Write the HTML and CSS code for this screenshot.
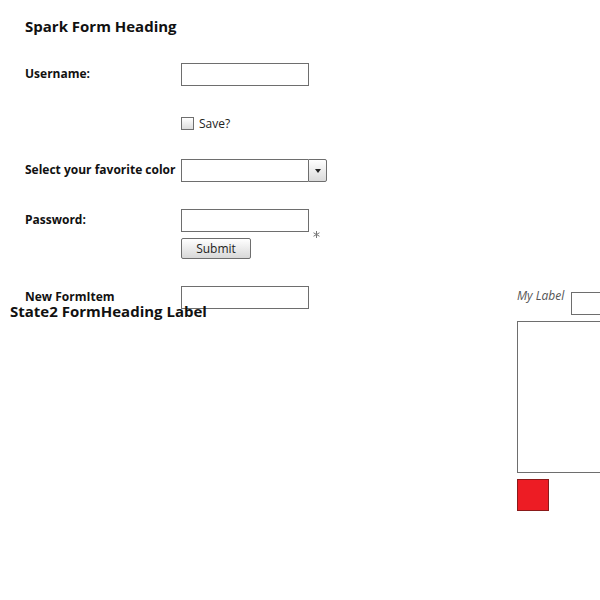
FILE: index.html
```html
<!DOCTYPE html>
<html>
<head>
<meta charset="utf-8">
<link rel="stylesheet" href="styles.css">
</head>
<body>
<div class="stage">
  <form class="form">
    <h1 class="form-heading">Spark Form Heading</h1>
    <div class="item">
      <label class="item-label">Username:</label>
      <div class="item-content"><input class="text-input" type="text"></div>
    </div>
    <div class="item item-check">
      <span class="item-label"></span>
      <div class="item-content">
        <label class="check"><span class="check-box"></span><span>Save?</span></label>
      </div>
    </div>
    <div class="item">
      <label class="item-label">Select your favorite color</label>
      <div class="item-content">
        <div class="combo"><span class="combo-field"></span><span class="combo-btn"><span class="combo-arrow"></span></span></div>
      </div>
    </div>
    <div class="item">
      <label class="item-label">Password:</label>
      <div class="item-content item-stack">
        <input class="text-input" type="password">
        <button class="btn" type="button">Submit</button>
      </div>
      <svg class="required" width="7" height="7" viewBox="0 0 7 7"><g stroke="#777" stroke-width="1"><line x1="3.5" y1="0" x2="3.5" y2="7"/><line x1="0.5" y1="1.75" x2="6.5" y2="5.25"/><line x1="0.5" y1="5.25" x2="6.5" y2="1.75"/></g></svg>
    </div>
    <div class="item">
      <label class="item-label">New FormItem</label>
      <div class="item-content"><input class="text-input" type="text"></div>
    </div>
  </form>
  <div class="state2-heading">State2 FormHeading Label</div>
  <div class="side">
    <div class="side-row">
      <span class="side-label">My Label</span>
      <input class="text-input side-input" type="text">
    </div>
    <div class="side-area"></div>
    <div class="swatch"></div>
  </div>
</div>
</body>
</html>
```
FILE: styles.css
```css
html, body {
  margin: 0;
  padding: 0;
  background: #fff;
  overflow: hidden;
}
body {
  font-family: "Open Sans", "DejaVu Sans", sans-serif;
  color: #111;
  width: 600px;
  height: 600px;
}
.stage {
  position: relative;
  width: 600px;
  height: 600px;
  overflow: hidden;
}
.form {
  padding: 16px 0 0 25px;
  display: flex;
  flex-direction: column;
  gap: 27px;
}
.form-heading {
  margin: 0;
  font-size: 15px;
  line-height: 20px;
  font-weight: 700;
  color: #111;
  height: 20px;
}
.item {
  display: flex;
  align-items: flex-start;
}
.item-label {
  width: 156px;
  font-size: 12px;
  font-weight: 700;
  line-height: 17px;
  padding-top: 2px;
  color: #111;
}
.item-content {
  display: flex;
  align-items: center;
}
.item-stack {
  flex-direction: column;
  align-items: flex-start;
  gap: 6px;
}
.text-input {
  box-sizing: border-box;
  width: 128px;
  height: 23px;
  margin: 0;
  border: 1px solid #6e6e6e;
  background: #fff;
  padding: 0 4px;
  font: inherit;
  outline: none;
}
.item-check .item-content {
  height: 19px;
}
.check {
  display: flex;
  align-items: center;
  gap: 5px;
  font-size: 12px;
  color: #222;
  line-height: 17px;
  padding-top: 1px;
}
.check-box {
  box-sizing: border-box;
  width: 13px;
  height: 13px;
  border: 1px solid #6e6e6e;
  background: linear-gradient(#ffffff, #dcdcdc);
}
.combo {
  display: flex;
  height: 23px;
}
.combo-field {
  box-sizing: border-box;
  width: 127px;
  height: 23px;
  border: 1px solid #6e6e6e;
  border-right: none;
  background: #fff;
}
.combo-btn {
  box-sizing: border-box;
  width: 19px;
  height: 23px;
  border: 1px solid #6e6e6e;
  border-radius: 0 2px 2px 0;
  background: linear-gradient(#ffffff, #dadada);
  display: flex;
  align-items: center;
  justify-content: center;
}
.combo-arrow {
  width: 0;
  height: 0;
  border-left: 3.5px solid transparent;
  border-right: 3.5px solid transparent;
  border-top: 4px solid #222;
}
.btn {
  box-sizing: border-box;
  width: 70px;
  height: 21px;
  margin: 0;
  padding: 0;
  border: 1px solid #6e6e6e;
  border-radius: 2px;
  background: linear-gradient(#ffffff, #d8d8d8);
  font-family: inherit;
  font-size: 12px;
  color: #222;
  line-height: 19px;
}
.required {
  margin: 22px 0 0 4px;
}
.state2-heading {
  position: absolute;
  left: 10px;
  top: 301px;
  font-size: 15px;
  line-height: 20px;
  font-weight: 700;
  color: #111;
}
.side {
  position: absolute;
  left: 517px;
  top: 287px;
  display: flex;
  flex-direction: column;
  gap: 6px;
}
.side-row {
  display: flex;
  align-items: flex-start;
  gap: 7px;
}
.side-label {
  font-size: 12px;
  font-style: italic;
  color: #555;
  line-height: 17px;
  white-space: nowrap;
}
.side-input {
  margin-top: 5px;
  width: 100px;
}
.side-area {
  box-sizing: border-box;
  width: 200px;
  height: 152px;
  border: 1px solid #6e6e6e;
  background: #fff;
}
.swatch {
  box-sizing: border-box;
  width: 32px;
  height: 32px;
  background: #ed1c24;
  border: 1px solid #8a1a1a;
}
```
